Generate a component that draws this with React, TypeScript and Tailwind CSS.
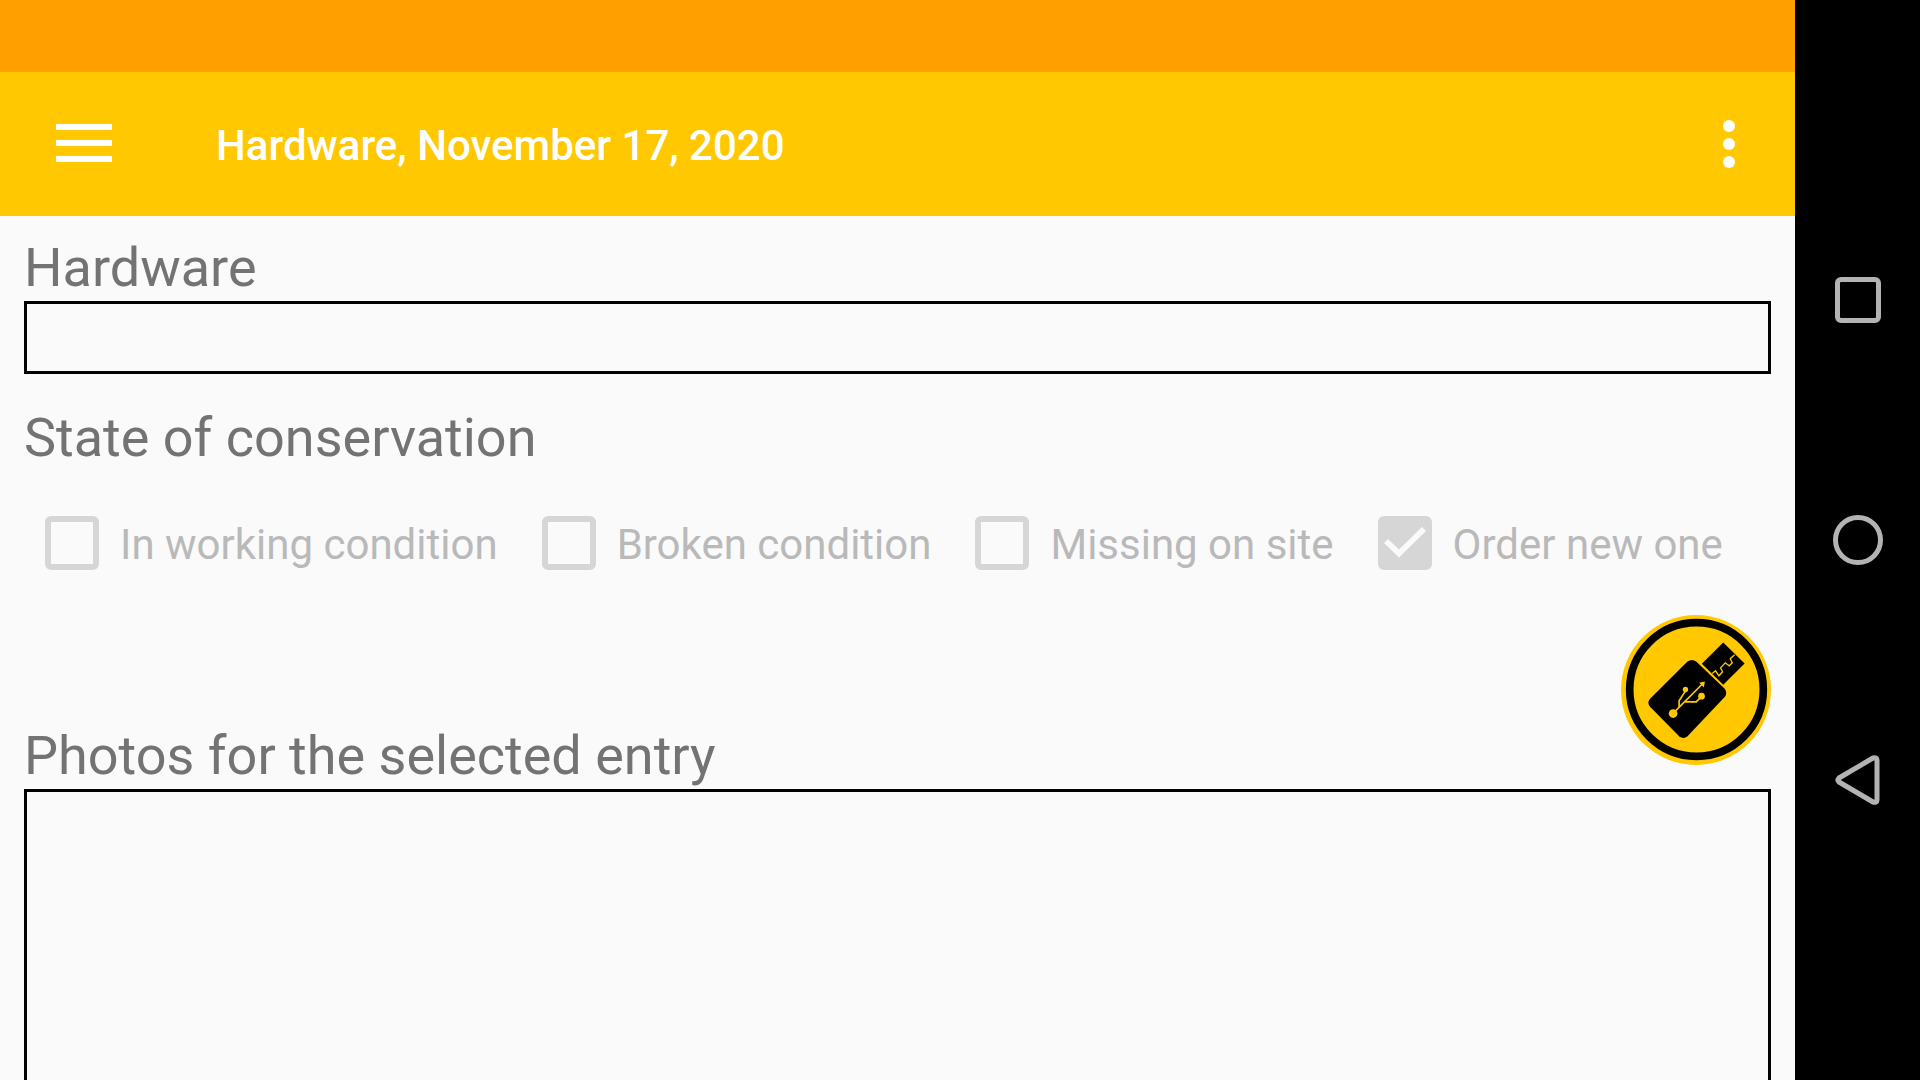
import React from "react";

const conditions = [
  { id: "working", label: "In working condition", checked: false },
  { id: "broken", label: "Broken condition", checked: false },
  { id: "missing", label: "Missing on site", checked: false },
  { id: "order", label: "Order new one", checked: true },
];

function Condition({ id, label, checked }: { id: string; label: string; checked: boolean }) {
  return (
    <div className="flex items-center">
      <span className="relative flex size-[54px] shrink-0">
        <input
          id={id}
          type="checkbox"
          disabled
          defaultChecked={checked}
          className="peer size-full appearance-none rounded-md border-6 border-[#d6d6d6] checked:bg-[#d6d6d6]"
        />
        <svg viewBox="0 0 54 54" className="pointer-events-none absolute inset-0 hidden size-full peer-checked:block" aria-hidden="true">
          <path d="M6 27 10 23 21 33.500 44 11 48 15 21 41.500Z" fill="#fafafa" />
        </svg>
      </span>
      <label htmlFor={id} className="pt-1 pl-[21px] text-[42px] leading-[50px] whitespace-nowrap text-[#b9b9b9]">
        {label}
      </label>
    </div>
  );
}

function UsbIcon() {
  return (
    <svg viewBox="63 45 449 449" className="size-full" aria-hidden="true">
      <circle cx="289" cy="268" r="200" fill="none" stroke="#000" strokeWidth="23" />
      <path d="M369 127 433 190 369 254 305 191Z" fill="#000" />
      <path d="M262 184Q275 175 288 184L372 264Q383 275 374 290L262 408Q250 418 237 408L150 320Q140 308 150 296Z" fill="#000" />
      <g fill="none" stroke="#ffc800" strokeWidth="4">
        <path d="M336 220 346 212 356 227 367 215 361 203 375 188 387 197 396 188 390 176 403 164" />
        <path d="M218 340 308 250M237 322V302L256 272M254 305H288L304 289" strokeWidth="5" />
      </g>
      <g fill="#ffc800">
        <circle cx="219" cy="340" r="13" />
        <circle cx="256" cy="268" r="8" />
        <circle cx="304" cy="288" r="10" />
        <path d="M314 244 311 262 297 248Z" />
      </g>
    </svg>
  );
}

export default function App() {
  return (
    <div className="flex h-screen overflow-hidden bg-[#fafafa] font-[Roboto,sans-serif]">
      <div className="flex min-w-0 flex-1 flex-col">
        <div className="h-18 shrink-0 bg-[#ffa000]" />
        <header className="flex h-36 shrink-0 items-center bg-[#ffc800] pr-12 pl-14 text-white">
          <button type="button" aria-label="Open menu" className="flex w-14 flex-col gap-2.5 pb-0.5">
            <span className="h-1.5 w-full bg-white" />
            <span className="h-1.5 w-full bg-white" />
            <span className="h-1.5 w-full bg-white" />
          </button>
          <h1 className="flex-1 pt-1 pl-26 text-[42px] leading-[50px] font-medium">Hardware, November 17, 2020</h1>
          <button type="button" aria-label="More options" className="flex w-9 flex-col items-center gap-1.5">
            <span className="size-3 rounded-full bg-white" />
            <span className="size-3 rounded-full bg-white" />
            <span className="size-3 rounded-full bg-white" />
          </button>
        </header>
        <main className="flex min-h-0 flex-1 flex-col px-6 pt-5 text-[54px] leading-[63px] text-[#737373]">
          <label htmlFor="hardware" className="pb-0.5">
            Hardware
          </label>
          <input id="hardware" type="text" className="h-[73px] w-full shrink-0 border-3 border-black px-3 text-[42px] outline-none" />
          <fieldset className="pt-8">
            <legend className="contents">State of conservation</legend>
            <div className="flex gap-11 pt-[47px] pl-[21px]">
              {conditions.map((c) => (
                <Condition key={c.id} {...c} />
              ))}
            </div>
          </fieldset>
          <section className="relative flex min-h-0 flex-1 flex-col pt-[154px]">
            <button
              type="button"
              aria-label="Hardware list"
              className="absolute top-[45px] right-0 size-[150px] rounded-full bg-[#ffc800]"
            >
              <UsbIcon />
            </button>
            <h2 className="pb-0.5">Photos for the selected entry</h2>
            <div className="min-h-0 flex-1 border-3 border-b-0 border-black" />
          </section>
        </main>
      </div>
      <nav aria-label="System" className="flex w-[125px] shrink-0 flex-col items-center justify-center gap-[180px] bg-black">
        <button type="button" aria-label="Recent apps" className="flex size-15 items-center justify-center">
          <span className="size-[46px] rounded-md border-5 border-[#b3b3b3]" />
        </button>
        <button type="button" aria-label="Home" className="flex size-15 items-center justify-center">
          <span className="size-[50px] rounded-full border-5 border-[#b3b3b3]" />
        </button>
        <button type="button" aria-label="Back" className="flex size-15 items-center justify-center">
          <svg viewBox="0 0 60 60" className="size-full" aria-hidden="true">
            <path d="M11 28 45 8Q49 7 49 10V50Q49 53 45 52L11 32Q9 30 11 28Z" fill="none" stroke="#b3b3b3" strokeWidth="5" strokeLinejoin="round" />
          </svg>
        </button>
      </nav>
    </div>
  );
}
